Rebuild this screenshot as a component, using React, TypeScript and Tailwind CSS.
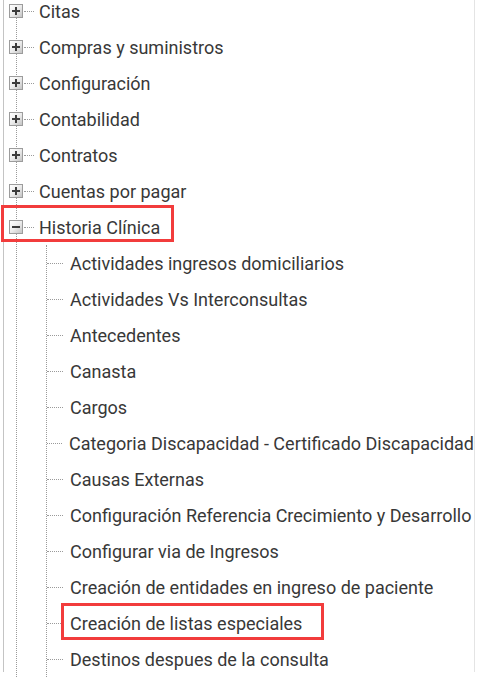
const topItems = [
  'Citas',
  'Compras y suministros',
  'Configuración',
  'Contabilidad',
  'Contratos',
  'Cuentas por pagar',
];

const children = [
  'Actividades ingresos domiciliarios',
  'Actividades Vs Interconsultas',
  'Antecedentes',
  'Canasta',
  'Cargos',
  'Categoria Discapacidad - Certificado Discapacidad',
  'Causas Externas',
  'Configuración Referencia Crecimiento y Desarrollo',
  'Configurar via de Ingresos',
  'Creación de entidades en ingreso de paciente',
  'Creación de listas especiales',
  'Destinos despues de la consulta',
];

function ToggleBox({ open }: { open?: boolean }) {
  return (
    <span className="relative z-10 flex h-[14px] w-[14px] shrink-0 items-center justify-center border border-[#9c9c9c] bg-gradient-to-br from-white via-[#ececec] to-[#c4c4c4]">
      <svg width="8" height="8" viewBox="0 0 8 8">
        <rect x="0" y="3" width="8" height="2" fill="#3c3c3c" />
        {!open && <rect x="3" y="0" width="2" height="8" fill="#3c3c3c" />}
      </svg>
    </span>
  );
}

export default function App() {
  return (
    <div className="h-[679px] overflow-hidden bg-white" style={{ fontFamily: 'Roboto, "Liberation Sans", sans-serif' }}>
      <div className="relative ml-[3px] h-full w-[472px] border-l border-r border-l-[#c4c4c4] border-r-[#e4e4e4] text-[18px] text-[#383838]">
        <div className="relative -mt-[7px]">
          {/* top level guide */}
          <div className="absolute bottom-0 left-[12px] top-[18px] border-l border-dotted border-[#9a9a9a]" />

          {topItems.map((label) => (
            <div key={label} className="relative flex h-9 items-center pl-[5px]">
              <ToggleBox />
              <span className="ml-[1px] w-[10px] border-t border-dotted border-[#9a9a9a]" />
              <span className="ml-[5px] whitespace-nowrap">{label}</span>
            </div>
          ))}

          {/* Historia Clínica */}
          <div className="relative flex h-9 items-center pl-[5px]">
            <ToggleBox open />
            <span className="ml-[1px] w-[10px] border-t border-dotted border-[#9a9a9a]" />
            <span className="ml-[5px] whitespace-nowrap">Historia Clínica</span>
            <div className="absolute -left-[3px] -top-[4px] h-[37px] w-[173px] border-[3px] border-[#f23c3c]" />
          </div>

          <div className="relative">
            <div className="absolute bottom-0 left-[42px] top-0 border-l border-dotted border-[#9a9a9a]" />
            {children.map((label) => (
              <div key={label} className="relative flex h-9 items-center pl-[43px]">
                <span className="w-[16px] border-t border-dotted border-[#9a9a9a]" />
                <span className="ml-[7px] whitespace-nowrap">{label}</span>
                {label === 'Creación de listas especiales' && (
                  <div className="absolute -top-[2px] left-[57px] h-[37px] w-[263px] border-[3px] border-[#f23c3c]" />
                )}
              </div>
            ))}
          </div>
        </div>
      </div>
    </div>
  );
}
